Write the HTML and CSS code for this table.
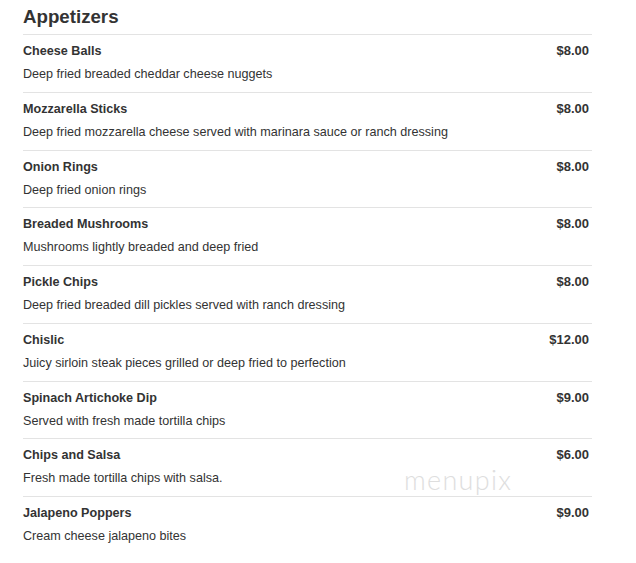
FILE: index.html
```html
<!DOCTYPE html>
<html>
<head>
<meta charset="utf-8">
<link rel="stylesheet" href="styles.css">
</head>
<body>
<div class="menu">
  <h3 class="title">Appetizers</h3>
  <div class="item">
    <div class="row"><span class="name">Cheese Balls</span><span class="price">$8.00</span></div>
    <div class="desc">Deep fried breaded cheddar cheese nuggets</div>
  </div>
  <div class="item">
    <div class="row"><span class="name">Mozzarella Sticks</span><span class="price">$8.00</span></div>
    <div class="desc">Deep fried mozzarella cheese served with marinara sauce or ranch dressing</div>
  </div>
  <div class="item">
    <div class="row"><span class="name">Onion Rings</span><span class="price">$8.00</span></div>
    <div class="desc">Deep fried onion rings</div>
  </div>
  <div class="item">
    <div class="row"><span class="name">Breaded Mushrooms</span><span class="price">$8.00</span></div>
    <div class="desc">Mushrooms lightly breaded and deep fried</div>
  </div>
  <div class="item">
    <div class="row"><span class="name">Pickle Chips</span><span class="price">$8.00</span></div>
    <div class="desc">Deep fried breaded dill pickles served with ranch dressing</div>
  </div>
  <div class="item">
    <div class="row"><span class="name">Chislic</span><span class="price">$12.00</span></div>
    <div class="desc">Juicy sirloin steak pieces grilled or deep fried to perfection</div>
  </div>
  <div class="item">
    <div class="row"><span class="name">Spinach Artichoke Dip</span><span class="price">$9.00</span></div>
    <div class="desc">Served with fresh made tortilla chips</div>
  </div>
  <div class="item">
    <div class="row"><span class="name">Chips and Salsa</span><span class="price">$6.00</span></div>
    <div class="desc">Fresh made tortilla chips with salsa.</div>
  </div>
  <div class="item">
    <div class="row"><span class="name">Jalapeno Poppers</span><span class="price">$9.00</span></div>
    <div class="desc">Cream cheese jalapeno bites</div>
  </div>
  <div class="watermark">menupix</div>
</div>
</body>
</html>
```

FILE: styles.css
```css
html, body {
  margin: 0;
  padding: 0;
  background: #fff;
}
body {
  font-family: "Liberation Sans", Arial, sans-serif;
  color: #333;
}
.menu {
  position: relative;
  width: 569px;
  margin-left: 23px;
}
.title {
  margin: 6px 0 6px 0;
  font-size: 18.7px;
  line-height: 22px;
  font-weight: bold;
  color: #333;
}
.item {
  border-top: 1px solid #e3e3e3;
  padding: 7px 3px 8.75px 0;
}
.row {
  display: flex;
  justify-content: space-between;
  font-size: 12.6px;
  line-height: 18px;
}
.name {
  font-weight: bold;
}
.price {
  font-weight: bold;
  font-size: 13px;
}
.desc {
  margin-top: 5px;
  font-size: 12.6px;
  line-height: 18px;
}
.watermark {
  position: absolute;
  left: 381px;
  top: 457px;
  font-family: "Lato", "DejaVu Sans", sans-serif;
  font-weight: 300;
  font-size: 27px;
  letter-spacing: 1.3px;
  color: #dedede;
}
```
